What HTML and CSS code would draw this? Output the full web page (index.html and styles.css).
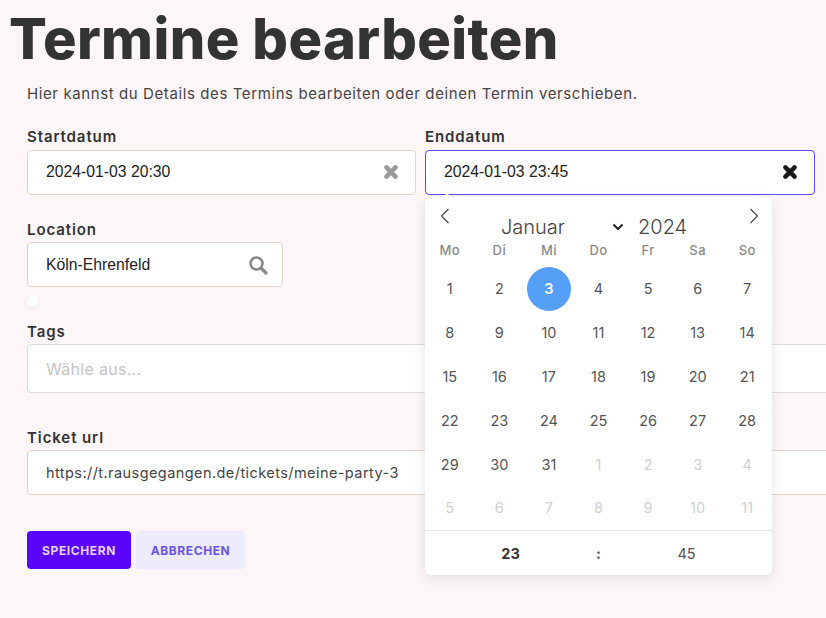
FILE: index.html
```html
<!DOCTYPE html>
<html lang="de">
<head>
<meta charset="utf-8">
<title>Termine bearbeiten</title>
<link rel="stylesheet" href="styles.css">
</head>
<body>
<main class="page">
  <h1 class="title">Termine bearbeiten</h1>
  <div class="content">
    <p class="intro">Hier kannst du Details des Termins bearbeiten oder deinen Termin verschieben.</p>
    <div class="date-row">
      <div class="field">
        <label class="label label-date">Startdatum</label>
        <div class="input input-date">
          <span class="value">2024-01-03 20:30</span>
          <svg class="icon" width="16" height="16" viewBox="0 0 14 14"><path d="M3 3 L11 11 M11 3 L3 11" stroke="#999" stroke-width="4" stroke-linecap="round"/></svg>
        </div>
      </div>
      <div class="field field-end">
        <label class="label label-date">Enddatum</label>
        <div class="input input-date input-active">
          <span class="value">2024-01-03 23:45</span>
          <svg class="icon" width="16" height="16" viewBox="0 0 14 14"><path d="M3 3 L11 11 M11 3 L3 11" stroke="#1a1a1a" stroke-width="4" stroke-linecap="round"/></svg>
        </div>
        <div class="calendar">
          <span class="cal-arrow"></span>
          <div class="cal-head">
            <svg class="nav" width="10" height="16" viewBox="0 0 10 16"><path d="M8.5 1 L1.5 8 L8.5 15" fill="none" stroke="#444" stroke-width="1.2"/></svg>
            <div class="cal-title">
              <span class="month">Januar</span>
              <svg class="chev" width="12" height="8" viewBox="0 0 12 8"><path d="M1.5 1.5 L6 6 L10.5 1.5" fill="none" stroke="#222" stroke-width="2"/></svg>
              <span class="year">2024</span>
            </div>
            <svg class="nav" width="10" height="16" viewBox="0 0 10 16"><path d="M1.5 1 L8.5 8 L1.5 15" fill="none" stroke="#444" stroke-width="1.2"/></svg>
          </div>
          <div class="weekdays">
            <span>Mo</span><span>Di</span><span>Mi</span><span>Do</span><span>Fr</span><span>Sa</span><span>So</span>
          </div>
          <div class="days">
            <span>1</span><span>2</span><span class="selected">3</span><span>4</span><span>5</span><span>6</span><span>7</span>
            <span>8</span><span>9</span><span>10</span><span>11</span><span>12</span><span>13</span><span>14</span>
            <span>15</span><span>16</span><span>17</span><span>18</span><span>19</span><span>20</span><span>21</span>
            <span>22</span><span>23</span><span>24</span><span>25</span><span>26</span><span>27</span><span>28</span>
            <span>29</span><span>30</span><span>31</span><span class="other">1</span><span class="other">2</span><span class="other">3</span><span class="other">4</span>
            <span class="other">5</span><span class="other">6</span><span class="other">7</span><span class="other">8</span><span class="other">9</span><span class="other">10</span><span class="other">11</span>
          </div>
          <div class="time">
            <span class="hour">23</span><span class="colon">:</span><span class="minute">45</span>
          </div>
        </div>
      </div>
    </div>
    <div class="field field-location">
      <label class="label">Location</label>
      <div class="input input-location">
        <span class="value">Köln-Ehrenfeld</span>
        <svg class="icon" width="20" height="20" viewBox="0 0 20 20"><circle cx="8.5" cy="8.5" r="6" fill="none" stroke="#8a8a8a" stroke-width="2.6"/><path d="M13 13 L18 18" stroke="#8a8a8a" stroke-width="3.2" stroke-linecap="round"/></svg>
      </div>
      <span class="dot"></span>
    </div>
    <div class="field field-tags">
      <label class="label">Tags</label>
      <div class="input input-tags"><span class="placeholder">Wähle aus...</span></div>
    </div>
    <div class="field field-url">
      <label class="label">Ticket url</label>
      <div class="input input-url"><span class="url">https://t.rausgegangen.de/tickets/meine-party-3</span></div>
    </div>
    <div class="actions">
      <button class="btn btn-primary">SPEICHERN</button>
      <button class="btn btn-secondary">ABBRECHEN</button>
    </div>
  </div>
</main>
</body>
</html>
```
FILE: styles.css
```css
* { box-sizing: border-box; }
html, body { margin: 0; height: 100%; overflow: hidden; }
body { background: #fdf6f9; color: #333; font-family: "Inter", "Liberation Sans", sans-serif; }
.page { width: 826px; height: 618px; overflow: hidden; padding: 0 0 0 10px; }
.title { margin: 0 0 0 -1px; padding-top: 7px; font-size: 56px; line-height: 64px; font-weight: 800; color: #333; letter-spacing: 0.4px; white-space: nowrap; }
.content { padding-left: 17px; }
.intro { margin: 13px 0 0; font-size: 15px; line-height: 20px; color: #444; letter-spacing: 0.6px; white-space: nowrap; }
.date-row { display: grid; grid-template-columns: 389px 390px; gap: 9px; margin-top: 23px; width: 788px; }
.field { display: flex; flex-direction: column; flex: 1; }
.field-end { position: relative; }
.label { font-size: 15px; line-height: 20px; font-weight: 600; color: #333; letter-spacing: 0.9px; margin-bottom: 2px; }
.label-date { margin-bottom: 3px; }
.input { display: flex; align-items: center; justify-content: space-between; background: #fff; border: 1px solid #e3d6c8; border-radius: 4px; padding: 0 16px 0 18px; }
.input-date { height: 45px; padding-bottom: 2px; }
.input-active { border-color: #5b4be8; }
.value { font-family: "Liberation Sans", sans-serif; font-size: 15.75px; color: #222; }
.icon { flex: none; }
.field-location { width: 256px; margin-top: 25px; position: relative; flex: none; }
.input-location { height: 45px; padding-right: 14px; }
.dot { display: block; width: 11px; height: 11px; margin-top: 9px; background: #fff; border-radius: 50%; box-shadow: 0 1px 4px rgba(0,0,0,.06); }
.field-tags { margin-top: 15px; width: 900px; }
.input-tags { height: 49px; border-color: #ddd; }
.placeholder { font-size: 16px; color: #c4c4c4; letter-spacing: 0.3px; }
.field-url { margin-top: 35px; width: 900px; }
.input-url { height: 45px; }
.url { font-size: 14.5px; color: #444; letter-spacing: 0.43px; }
.actions { display: flex; gap: 5px; margin-top: 36px; }
.btn { height: 38px; border: 0; border-radius: 4px; font-family: inherit; font-size: 12px; font-weight: 700; letter-spacing: 0.6px; padding: 0; }
.btn-primary { width: 104px; background: #5a05fa; color: #e4d2ff; }
.btn-secondary { width: 109px; background: #eeebfc; color: #6a55e8; }
.calendar { position: absolute; top: 70px; left: 0; width: 347px; height: 378px; background: #fff; border-radius: 6px; box-shadow: 0 3px 13px rgba(0,0,0,.1); z-index: 2; }
.cal-arrow { position: absolute; top: -4px; left: 17px; width: 0; height: 0; border-left: 5px solid transparent; border-right: 5px solid transparent; border-bottom: 5px solid #fff; }
.cal-head { display: flex; justify-content: space-between; padding: 11px 13px 0 15px; height: 42px; position: relative; }
.cal-title { position: absolute; top: 18px; left: 76px; display: flex; align-items: center; font-size: 20px; line-height: 24px; font-weight: 300; color: #444; }
.month { width: 111px; }
.chev { margin-right: 14px; }
.weekdays { display: grid; grid-template-columns: repeat(7, 1fr); height: 22px; align-items: center; text-align: center; font-size: 13px; font-weight: 500; color: #8a8a8a; letter-spacing: 0.4px; }
.days { display: grid; grid-template-columns: repeat(7, 1fr); grid-auto-rows: 43.8px; justify-items: center; align-items: center; margin-top: 6px; font-size: 14.5px; color: #555; height: 263px; }
.days span { display: flex; align-items: center; justify-content: center; width: 44px; height: 44px; border-radius: 50%; }
.days .selected { background: #569ff7; color: #fff; font-weight: 600; }
.days .other { color: #cfcfcf; }
.time { display: grid; grid-template-columns: 1fr 20px 1fr; padding: 0 7.5px; text-align: center; border-top: 1px solid #e6e6e6; height: 45px; align-items: center; font-size: 14.5px; color: #555; }
.hour { font-weight: 700; color: #333; }
.colon { font-weight: 700; }
```
